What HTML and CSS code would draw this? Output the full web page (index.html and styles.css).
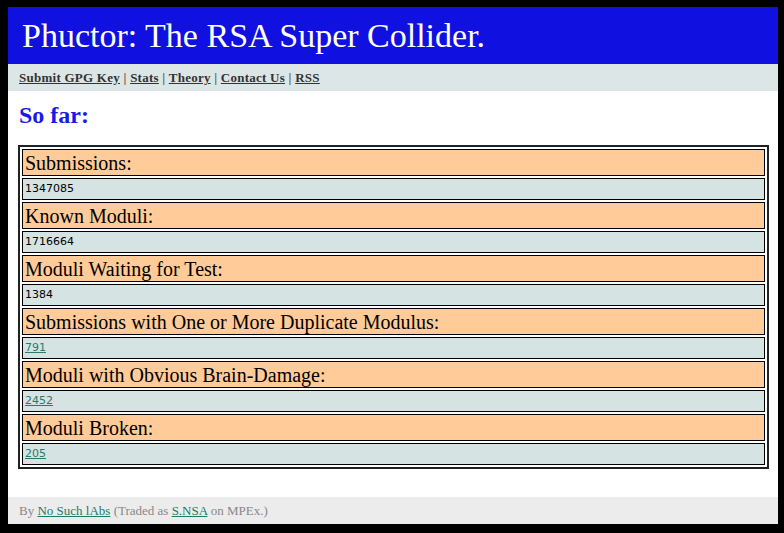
FILE: index.html
```html
<!DOCTYPE html>
<html lang="en">
<head>
    <meta charset="UTF-8">
    <title>Phuctor: The RSA Super Collider.</title>
    <link rel="stylesheet" href="styles.css">
</head>
<body>
    <div class="page">
        <div class="header">
            <h1>Phuctor: The RSA Super Collider.</h1>
        </div>
        <div class="nav">
            <a href="#">Submit GPG Key</a> | <a href="#">Stats</a> | <a href="#">Theory</a> | <a href="#">Contact Us</a> | <a href="#">RSS</a>
        </div>
        <div class="content">
            <h2>So far:</h2>
            <table class="stats">
                <tr><td class="label">Submissions:</td></tr>
                <tr><td class="value">1347085</td></tr>
                <tr><td class="label">Known Moduli:</td></tr>
                <tr><td class="value">1716664</td></tr>
                <tr><td class="label">Moduli Waiting for Test:</td></tr>
                <tr><td class="value">1384</td></tr>
                <tr><td class="label">Submissions with One or More Duplicate Modulus:</td></tr>
                <tr><td class="value"><a href="#">791</a></td></tr>
                <tr><td class="label">Moduli with Obvious Brain-Damage:</td></tr>
                <tr><td class="value"><a href="#">2452</a></td></tr>
                <tr><td class="label">Moduli Broken:</td></tr>
                <tr><td class="value"><a href="#">205</a></td></tr>
            </table>
        </div>
        <div class="footer">
            By <a href="#">No Such lAbs</a> (Traded as <a href="#">S.NSA</a> on MPEx.)
        </div>
    </div>
</body>
</html>
```

FILE: styles.css
```css
html {
    background: #000;
}
body {
    margin: 7px 6px 9px 8px;
    font-family: "Liberation Serif", "DejaVu Serif", serif;
}
.page {
    background: #fff;
}
.header {
    background: #1010e0;
    padding: 11px 14px 10px;
}
.header h1 {
    margin: 0;
    color: #fff;
    font-size: 34px;
    font-weight: normal;
    line-height: 36px;
}
.nav {
    background: #dde6e6;
    padding: 0 11px;
    height: 27px;
    line-height: 27px;
    font-size: 13px;
    font-weight: bold;
    letter-spacing: 0.25px;
    color: #555;
}
.nav a {
    color: #333;
}
.content {
    padding: 0 9px 28px 10px;
    overflow: hidden;
}
.content h2 {
    margin: 11px 0 16px 1px;
    color: #1a1ae6;
    font-size: 24px;
}
.stats {
    width: 100%;
    border: 2px solid #222;
    border-spacing: 2px;
}
.stats td {
    border: 1px solid #000;
    padding: 1px 2px;
}
.stats .label {
    background: #ffcc99;
    font-size: 20px;
    line-height: 23px;
    padding: 2px 2px 0;
}
.stats .value {
    background: #d5e3e3;
    font-family: "DejaVu Sans", sans-serif;
    font-size: 11px;
    line-height: 18px;
}
.stats .value a {
    color: #2a7a6a;
}
.footer {
    background: #ececec;
    padding: 0 11px;
    height: 27px;
    line-height: 27px;
    font-size: 13px;
    color: #888;
}
.footer a {
    color: #1f7a6a;
}
```
